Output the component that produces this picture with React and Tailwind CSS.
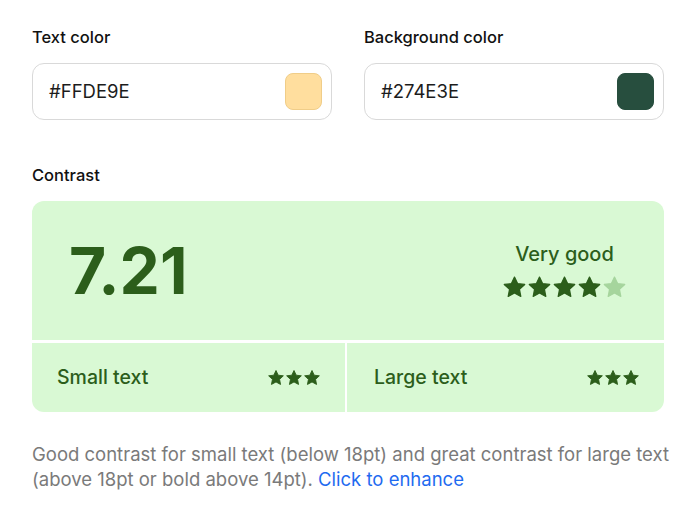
import { Fragment } from 'react'

const STAR = 'M12 2l2.94 6.26 6.86.83-5.05 4.72 1.3 6.79L12 17.27 5.95 20.6l1.3-6.79L2.2 9.09l6.86-.83z'

function Star({ size, faded }) {
  return (
    <svg width={size} height={size} viewBox="0 0 24 24" className={faded ? 'text-[#a6d59d]' : 'text-[#2c5e1b]'}>
      <path d={STAR} fill="currentColor" stroke="currentColor" strokeWidth="1.2" strokeLinejoin="round" />
    </svg>
  )
}

function Stars({ count, total, size }) {
  return (
    <div className="flex">
      {Array.from({ length: total }).map((_, i) => (
        <Star key={i} size={size} faded={i >= count} />
      ))}
    </div>
  )
}

function ColorField({ label, value, swatch }) {
  return (
    <div className="flex flex-col">
      <p className="mb-[15px] text-[16.5px] font-medium leading-[22px] text-[#111]">{label}</p>
      <div className="flex h-[57px] items-center justify-between rounded-xl border border-[#d9d9d9] pl-4 pr-[9px]">
        <span className="text-[18.5px] text-[#1c1c1c]">{value}</span>
        <span className={`h-[37px] w-[37px] rounded-lg border ${swatch}`} />
      </div>
    </div>
  )
}

export default function App() {
  return (
    <div className="min-h-[527px] bg-white pl-8 pt-[26px] font-['Inter',sans-serif]">
      <div className="grid w-[632px] grid-cols-2 gap-8">
        <ColorField label="Text color" value="#FFDE9E" swatch="bg-[#ffde9e] border-[#f0cd88]" />
        <ColorField label="Background color" value="#274E3E" swatch="bg-[#274e3e] border-[#274e3e]" />
      </div>

      <p className="mt-[44px] mb-[15px] text-[16.5px] font-medium leading-[22px] text-[#111]">Contrast</p>

      <div className="flex w-[632px] flex-col gap-[3px] overflow-hidden rounded-xl bg-white text-[#2c5e1b]">
        <div className="flex h-[139px] items-center justify-between bg-[#d9f9d4] pl-[37px] pr-[37px]">
          <span className="text-[64px] font-bold leading-none">7.21</span>
          <div className="flex flex-col items-center gap-[9px]">
            <span className="text-[20px] font-medium leading-[24px]">Very good</span>
            <Stars count={4} total={5} size={25} />
          </div>
        </div>
        <div className="grid grid-cols-[313px_1fr] gap-[2px]">
          {[
            ['Small text', 'pl-[25px] pr-[24px]'],
            ['Large text', 'pl-[27px] pr-[24px]'],
          ].map(([t, pad]) => (
            <Fragment key={t}>
              <div className={`flex h-[69px] items-center justify-between bg-[#d9f9d4] ${pad}`}>
                <span className="text-[19.5px] font-medium">{t}</span>
                <Stars count={3} total={3} size={18} />
              </div>
            </Fragment>
          ))}
        </div>
      </div>

      <p className="mt-[30px] w-[660px] text-[18.5px] leading-[25px] text-[#7a7a7a]">
        Good contrast for small text (below 18pt) and great contrast for large text (above 18pt or bold above 14pt).{' '}
        <a className="text-[#1f6bf0]">Click to enhance</a>
      </p>
    </div>
  )
}
